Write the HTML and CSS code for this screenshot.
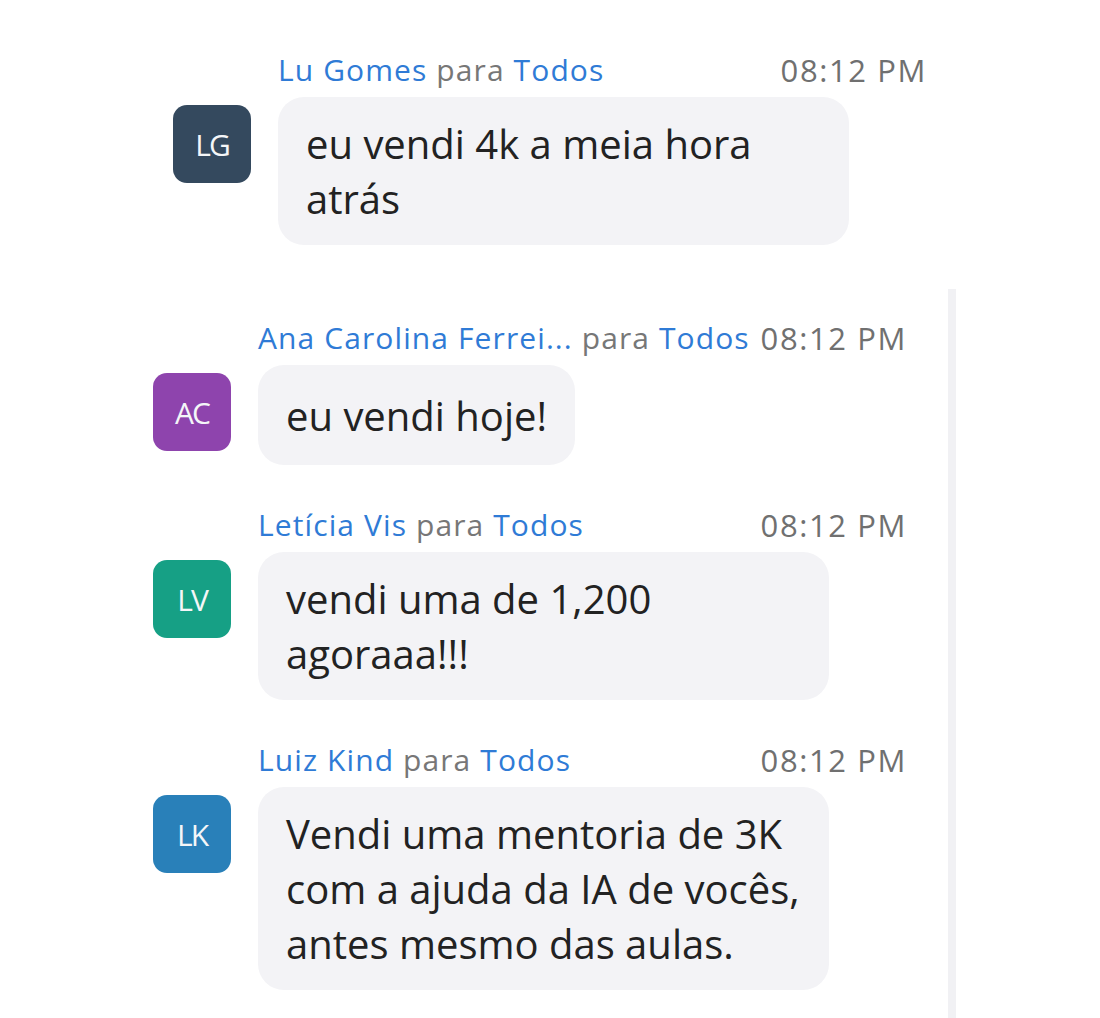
FILE: index.html
```html
<!DOCTYPE html>
<html lang="pt-BR">
<head>
<meta charset="utf-8">
<title>Chat</title>
<link rel="stylesheet" href="styles.css">
</head>
<body>
<div class="chat">
  <div class="msg msg--solo">
    <div class="msg-head">
      <span class="who"><span class="name">Lu Gomes</span> <span class="to">para</span> <span class="name">Todos</span></span>
      <span class="time">08:12 PM</span>
    </div>
    <div class="msg-body">
      <div class="avatar av-lg">LG</div>
      <div class="bubble bubble--wide">eu vendi 4k a meia hora<br>atrás</div>
    </div>
  </div>

  <div class="panel">
    <div class="msg">
      <div class="msg-head">
        <span class="who"><span class="name">Ana Carolina Ferrei...</span> <span class="to">para</span> <span class="name">Todos</span></span>
        <span class="time">08:12 PM</span>
      </div>
      <div class="msg-body">
        <div class="avatar av-ac">AC</div>
        <div class="bubble bubble--short">eu vendi hoje!</div>
      </div>
    </div>

    <div class="msg">
      <div class="msg-head">
        <span class="who"><span class="name">Letícia Vis</span> <span class="to">para</span> <span class="name">Todos</span></span>
        <span class="time">08:12 PM</span>
      </div>
      <div class="msg-body">
        <div class="avatar av-lv">LV</div>
        <div class="bubble bubble--wide">vendi uma de 1,200<br>agoraaa!!!</div>
      </div>
    </div>

    <div class="msg">
      <div class="msg-head">
        <span class="who"><span class="name">Luiz Kind</span> <span class="to">para</span> <span class="name">Todos</span></span>
        <span class="time">08:12 PM</span>
      </div>
      <div class="msg-body">
        <div class="avatar av-lk">LK</div>
        <div class="bubble bubble--wide">Vendi uma mentoria de 3K<br>com a ajuda da IA de vocês,<br>antes mesmo das aulas.</div>
      </div>
    </div>
  </div>
</div>
</body>
</html>
```

FILE: styles.css
```css
html, body {
  margin: 0;
  padding: 0;
  background: #ffffff;
}

body {
  font-family: "Open Sans", "Noto Sans", sans-serif;
  color: #222222;
  width: 1100px;
  height: 1018px;
  overflow: hidden;
}

.chat {
  display: flex;
  flex-direction: column;
}

.msg--solo {
  padding: 50px 0 0 173px;
}

.panel {
  margin-top: 44px;
  width: 795px;
  padding: 29px 0 40px 153px;
  border-right: 8px solid #f1f1f4;
  display: flex;
  flex-direction: column;
  gap: 40px;
}

.msg-head {
  margin-left: 105px;
  width: 648px;
  height: 40px;
  display: flex;
  justify-content: space-between;
  align-items: center;
  line-height: 40px;
  white-space: nowrap;
  margin-bottom: 7px;
}

.who {
  font-size: 30px;
  letter-spacing: 1.1px;
  min-width: 0;
}

.name {
  color: #2f7bd6;
}

.to {
  color: #777777;
}

.time {
  flex: none;
  font-size: 31px;
  letter-spacing: 1.6px;
  margin-right: -1px;
  color: #707070;
}

.msg-body {
  display: flex;
  align-items: flex-start;
  gap: 27px;
}

.avatar {
  flex: none;
  width: 78px;
  height: 78px;
  margin-top: 8px;
  border-radius: 14px;
  color: #f4f6f8;
  font-size: 30px;
  letter-spacing: -2px;
  display: flex;
  align-items: center;
  justify-content: center;
}

.av-lg { background: #34495e; }
.av-ac { background: #8e44ad; }
.av-lv { background: #16a085; }
.av-lk { background: #2980b9; }

.bubble {
  background: #f3f3f6;
  border-radius: 26px;
  padding: 19px 28px;
  font-size: 40px;
  line-height: 55px;
  white-space: nowrap;
  box-sizing: border-box;
}

.bubble--wide {
  width: 571px;
}

.bubble--short {
  min-height: 100px;
  display: flex;
  align-items: center;
}
```
